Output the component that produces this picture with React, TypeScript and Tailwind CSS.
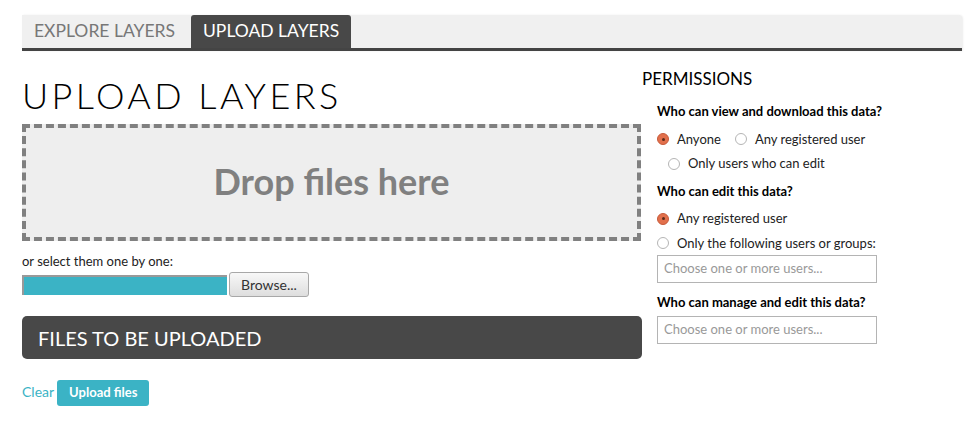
import React from 'react';

const font = { fontFamily: 'Lato, "Open Sans", sans-serif' };

function Radio({ checked, label }: { checked?: boolean; label: string }) {
  return (
    <label className="flex items-center gap-[8px] text-[13px] text-[#222]">
      {checked ? (
        <span className="w-[12px] h-[12px] rounded-full bg-[#e2704c] border border-[#c75a3a] flex items-center justify-center">
          <span className="w-[3px] h-[3px] rounded-full bg-[#5a2a1a]" />
        </span>
      ) : (
        <span className="w-[12px] h-[12px] rounded-full bg-white border border-[#b5b5b5]" />
      )}
      <span>{label}</span>
    </label>
  );
}

function UserSelect() {
  return (
    <div className="w-[220px] h-[28px] border border-[#b4b4b4] bg-white flex items-center px-[6px] text-[13px] text-[#999]">
      Choose one or more users...
    </div>
  );
}

export default function App() {
  return (
    <div className="w-[980px] h-[427px] bg-white pt-[15px] pl-[22px] pr-[18px]" style={font}>
      <div className="h-[36px] bg-[#f0f0f0] border-b-[3px] border-[#444] rounded-tr-[4px] shadow-[1px_0_2px_rgba(0,0,0,0.08)] flex">
        <div className="pl-[12px] w-[169px] shrink-0 whitespace-nowrap flex items-center text-[17.5px] text-[#777]">EXPLORE LAYERS</div>
        <div className="px-[12px] whitespace-nowrap bg-[#484848] rounded-t-[3px] flex items-center text-[17.5px] text-white">UPLOAD LAYERS</div>
      </div>

      <div className="flex">
        <div className="w-[620px]">
          <h1 className="mt-[24px] text-[36px] leading-[40px] font-light tracking-[0.095em] text-black">UPLOAD LAYERS</h1>
          <div className="mt-[9px] w-[619px] h-[117px] border-4 border-dashed border-[#808080] bg-[#eeeeee] flex items-center justify-center">
            <span className="text-[36px] leading-[40px] font-bold text-[#808080] -mt-[4px]">Drop files here</span>
          </div>
          <div className="mt-[12px] text-[13px] leading-[16px] text-[#222]">or select them one by one:</div>
          <div className="mt-[3px] flex items-center gap-[2px]">
            <div className="w-[205px] h-[20px] bg-[#3bb3c5] border-t-2 border-l-2 border-[#999]" />
            <button className="h-[25px] px-[11px] rounded-[3px] border border-[#a8a8a8] bg-gradient-to-b from-[#f8f8f8] to-[#dedede] text-[14px] text-[#333]">
              Browse...
            </button>
          </div>
          <div className="mt-[19px] h-[43px] rounded-[5px] bg-[#484848] flex items-center pl-[16px] text-[20px] text-white">
            FILES TO BE UPLOADED
          </div>
          <div className="mt-[21px] flex items-center gap-[3px]">
            <span className="text-[14px] leading-[16px] text-[#3bb3c5] -mt-[2px]">Clear</span>
            <button className="h-[26px] px-[12px] rounded-[3px] bg-[#3bb3c5] text-[13px] font-bold text-white">Upload files</button>
          </div>
        </div>

        <div className="flex-1">
          <h2 className="mt-[17px] text-[17px] leading-[22px] text-black">PERMISSIONS</h2>
          <div className="pl-[15px]">
            <div className="mt-[12px] text-[13px] font-bold text-black">Who can view and download this data?</div>
            <div className="mt-[8px] flex gap-[14px]">
              <Radio checked label="Anyone" />
              <Radio label="Any registered user" />
            </div>
            <div className="mt-[5px] pl-[11px]">
              <Radio label="Only users who can edit" />
            </div>
            <div className="mt-[8px] text-[13px] font-bold text-black">Who can edit this data?</div>
            <div className="mt-[8px]">
              <Radio checked label="Any registered user" />
            </div>
            <div className="mt-[5px]">
              <Radio label="Only the following users or groups:" />
            </div>
            <div className="mt-[2px]">
              <UserSelect />
            </div>
            <div className="mt-[10px] text-[13px] font-bold text-black">Who can manage and edit this data?</div>
            <div className="mt-[3px]">
              <UserSelect />
            </div>
          </div>
        </div>
      </div>
    </div>
  );
}
